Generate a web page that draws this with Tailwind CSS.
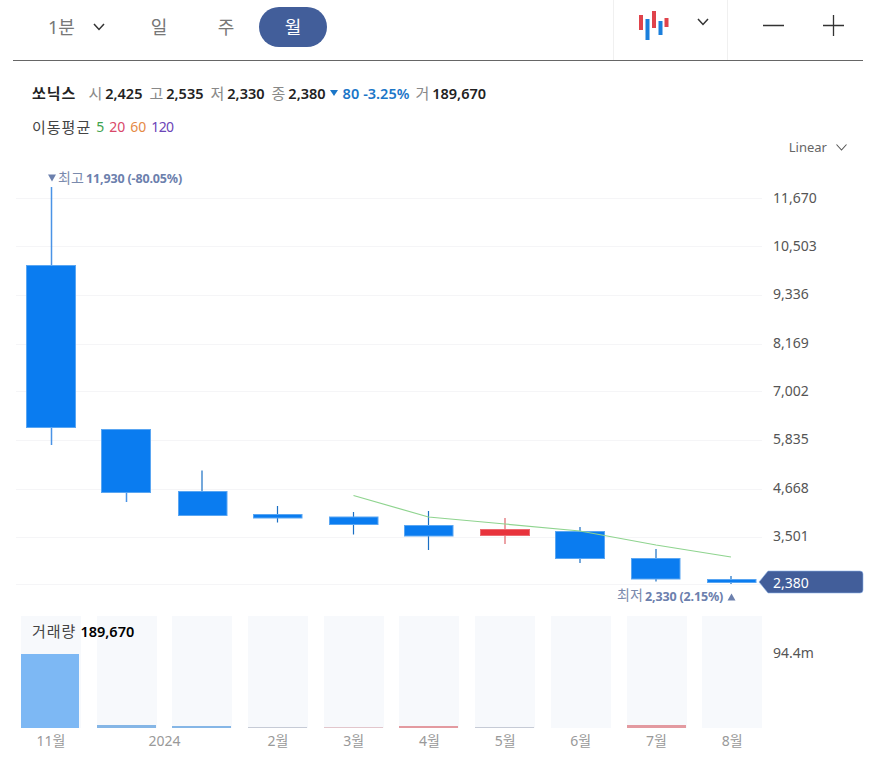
<!DOCTYPE html>
<html lang="ko">
<head>
<meta charset="UTF-8">
<title>쏘닉스 차트</title>
<script src="https://cdn.jsdelivr.net/npm/@tailwindcss/browser@4"></script>
</head>
<body class="bg-white">
<div class="w-[870px] h-[762px] overflow-hidden font-['Noto_Sans','Noto_Sans_CJK_KR',sans-serif]">

  <!-- top bar -->
  <header class="ml-[13px] w-[850px] h-[61px] border-b border-[#666666] flex items-stretch">
    <div class="flex items-center pb-[6px] flex-1">
      <span class="ml-[35px] w-[37px] text-[18px] leading-none text-[#777777]">1분</span>
      <svg class="ml-[8px]" width="12" height="8" viewBox="0 0 12 8" fill="none" stroke="#333" stroke-width="1.5"><path d="M1 1l5 5.5L11 1"/></svg>
      <span class="ml-[38px] w-[32px] text-center text-[18px] leading-none text-[#777777]">일</span>
      <span class="ml-[35px] w-[32px] text-center text-[18px] leading-none text-[#777777]">주</span>
      <span class="ml-[17px] w-[68px] h-[40px] rounded-full bg-[#425e9a] text-white text-[18px] flex items-center justify-center">월</span>
    </div>
    <div class="w-[115px] border-x border-[#f0f0f0] relative">
      <svg class="absolute left-[25px] top-[11px]" width="30" height="30" viewBox="0 0 30 30">
        <rect x="0" y="4" width="4" height="15" fill="#e0434b"/>
        <rect x="6.500" y="8" width="4" height="21" fill="#1b7fdc"/>
        <rect x="13" y="0" width="4" height="17" fill="#e0434b"/>
        <rect x="19.500" y="10" width="4" height="14" fill="#1b7fdc"/>
        <rect x="25.500" y="7" width="4" height="9" fill="#e0434b"/>
      </svg>
      <svg class="absolute left-[83px] top-[18px]" width="12" height="8" viewBox="0 0 12 8" fill="none" stroke="#333" stroke-width="1.500"><path d="M1 1l5 5.500L11 1"/></svg>
    </div>
    <div class="w-[135px] relative">
      <svg class="absolute left-[35px] top-[14px]" width="82" height="23" viewBox="0 0 82 23" fill="none" stroke="#333" stroke-width="1.300">
        <path d="M0 11.500h21M60 11.500h21M70.500 1v21"/>
      </svg>
    </div>
  </header>

  <!-- quote row -->
  <div class="ml-[32px] mt-[22px] h-[20px] flex items-center text-[14.500px] leading-none whitespace-nowrap">
    <span class="font-bold text-[15px] tracking-[1px] text-[#222222] mr-[12px]">쏘닉스</span>
    <span class="text-[#888888] text-[15px] mr-[3px]">시</span><b class="font-semibold text-[#222222] mr-[7px]">2,425</b>
    <span class="text-[#888888] text-[15px] mr-[3px]">고</span><b class="font-semibold text-[#222222] mr-[7px]">2,535</b>
    <span class="text-[#888888] text-[15px] mr-[3px]">저</span><b class="font-semibold text-[#222222] mr-[7px]">2,330</b>
    <span class="text-[#888888] text-[15px] mr-[3px]">종</span><b class="font-semibold text-[#222222] mr-[4px]">2,380</b>
    <svg class="mr-[5px]" width="8" height="6" viewBox="0 0 8 6"><path d="M0 0h8L4 6z" fill="#1b76c8"/></svg>
    <b class="font-semibold text-[#1b76c8] mr-[4px]">80</b>
    <b class="font-semibold text-[#1b76c8] mr-[6px]">-3.25%</b>
    <span class="text-[#888888] text-[15px] mr-[3px]">거</span><b class="font-semibold text-[#222222]">189,670</b>
  </div>

  <!-- moving averages -->
  <div class="ml-[32px] mt-[14px] h-[20px] flex items-center gap-[5px] text-[14px] leading-none">
    <span class="text-[#444444] text-[15px] tracking-[1px]">이동평균</span>
    <span class="text-[#3fa34d]">5</span>
    <span class="text-[#d9486a]">20</span>
    <span class="text-[#e58a45]">60</span>
    <span class="text-[#6c45b8] tracking-[-.6px]">120</span>
  </div>

  <!-- scale selector -->
  <div class="h-[20px] mt-[-1px] flex items-center justify-end pr-[23px] text-[13px] leading-none text-[#666666]">
    <span class="mt-[2px]">Linear</span>
    <svg class="ml-[9px] mt-[3px]" width="11" height="7" viewBox="0 0 11 7" fill="none" stroke="#555" stroke-width="1.100"><path d="M.5.5l5 5.500 5-5.500"/></svg>
  </div>

  <!-- price chart, y=155 to 605 -->
  <svg class="block" width="870" height="450" viewBox="0 156 870 450" font-size="14">
    <g stroke="#f5f5f7" stroke-width="1">
      <path d="M16 198.500h746M16 246.500h746M16 295.500h746M16 344.500h746M16 391.500h746M16 440.500h746M16 489.500h746M16 537.500h746M16 584.500h746"/>
    </g>

    <g stroke="#4a93e6" stroke-width="1.500">
      <path d="M51.500 187V445M126.500 429V502"/>
    </g>
    <g stroke="#1a6fc4" stroke-width="1.200">
      <path d="M202 470.500V516M277.500 506V522.500M353.500 512V534.500M428.500 511V550M580 527V563M656 549V581.500M731 576V584"/>
    </g>
    <path d="M505 518V544" stroke="#e0656b" stroke-width="1.200"/>

    <g fill="#0a7cf0" stroke="#5aa6f2" stroke-width="1">
      <rect x="26.500" y="265.500" width="49" height="162"/>
      <rect x="101.500" y="429.500" width="49" height="63"/>
      <rect x="178.500" y="491.500" width="48.500" height="24"/>
      <rect x="253.500" y="514.500" width="48.500" height="3.500"/>
      <rect x="329.500" y="517" width="48.500" height="7.500"/>
      <rect x="404.500" y="525.500" width="48.500" height="10.500"/>
      <rect x="555.500" y="531.500" width="49" height="27"/>
      <rect x="631.500" y="558.500" width="48.500" height="20.500"/>
      <rect x="707.500" y="579.500" width="48.500" height="3"/>
    </g>
    <rect x="480.500" y="529.500" width="49" height="6" fill="#e8333c" stroke="#ec6a70" stroke-width="1"/>

    <path d="M353.500 495.500L428.500 517L505 524L580 531L656 545L731 557" fill="none" stroke="#8fd48f" stroke-width="1.200"/>

    <path d="M48 174.500h8l-4 7z" fill="#6c80ad"/>
    <text x="58" y="183" font-size="14" fill="#7a8aad">최고</text>
    <text x="86" y="183" font-size="12.500" font-weight="700" fill="#6c80ad" letter-spacing="-.15">11,930 (-80.05%)</text>

    <text x="617" y="600" font-size="14" fill="#7a8aad">최저</text>
    <text x="645" y="601" font-size="12.500" font-weight="700" fill="#6c80ad" letter-spacing="-.15">2,330 (2.15%)</text>
    <path d="M727.500 600.500h8l-4-7z" fill="#6c80ad"/>

    <g fill="#555555">
      <text x="773" y="203">11,670</text>
      <text x="773" y="251">10,503</text>
      <text x="773" y="299">9,336</text>
      <text x="773" y="348">8,169</text>
      <text x="773" y="396">7,002</text>
      <text x="773" y="444">5,835</text>
      <text x="773" y="493">4,668</text>
      <text x="773" y="541">3,501</text>
    </g>

    <path d="M759 582l9-11h92a3 3 0 0 1 3 3v16a3 3 0 0 1-3 3h-92z" fill="#425e9a" stroke="#8fb4e8" stroke-width=".6"/>
    <text x="773" y="588" fill="#ffffff">2,380</text>
  </svg>

  <!-- volume -->
  <div class="relative ml-[21px] mt-[10px] w-[850px] flex gap-[15.700px] h-[112px]">
    <div class="absolute left-[11px] top-[5px] flex items-center gap-[4px] text-[14px] leading-[20px] whitespace-nowrap">
      <span class="text-[#444444] text-[15px] tracking-[1px]">거래량</span><b class="font-semibold text-black text-[14.500px]">189,670</b>
    </div>
    <div class="w-[60px] bg-[#f7f9fc] flex flex-col justify-end"><div class="h-[74px] w-[58px] bg-[#7db8f4]"></div></div>
    <div class="w-[60px] bg-[#f7f9fc] flex flex-col justify-end"><div class="h-[3px] w-[59px] bg-[#85b6e6]"></div></div>
    <div class="w-[60px] bg-[#f7f9fc] flex flex-col justify-end"><div class="h-[2px] w-[59px] bg-[#85b6e6]"></div></div>
    <div class="w-[60px] bg-[#f7f9fc] flex flex-col justify-end"><div class="h-[1px] w-[59px] bg-[#c6cbd6]"></div></div>
    <div class="w-[60px] bg-[#f7f9fc] flex flex-col justify-end"><div class="h-[1px] w-[59px] bg-[#e2c6cc]"></div></div>
    <div class="w-[60px] bg-[#f7f9fc] flex flex-col justify-end"><div class="h-[2px] w-[59px] bg-[#e39aa0]"></div></div>
    <div class="w-[60px] bg-[#f7f9fc] flex flex-col justify-end"><div class="h-[1px] w-[59px] bg-[#c6cbd6]"></div></div>
    <div class="w-[60px] bg-[#f7f9fc]"></div>
    <div class="w-[60px] bg-[#f7f9fc] flex flex-col justify-end"><div class="h-[3px] w-[59px] bg-[#e39aa0]"></div></div>
    <div class="w-[60px] bg-[#f7f9fc]"></div>
    <span class="absolute left-[752px] top-[27px] text-[14px] leading-[20px] text-[#555555]">94.4m</span>
  </div>

  <!-- x axis -->
  <div class="ml-[21px] mt-[3px] flex gap-[15.700px] text-[14px] leading-[20px] text-[#999999] text-center">
    <span class="w-[60px]">11월</span>
    <span class="w-[135.700px]">2024</span>
    <span class="w-[60px]">2월</span>
    <span class="w-[60px]">3월</span>
    <span class="w-[60px]">4월</span>
    <span class="w-[60px]">5월</span>
    <span class="w-[60px]">6월</span>
    <span class="w-[60px]">7월</span>
    <span class="w-[60px]">8월</span>
  </div>
</div>
</body>
</html>
